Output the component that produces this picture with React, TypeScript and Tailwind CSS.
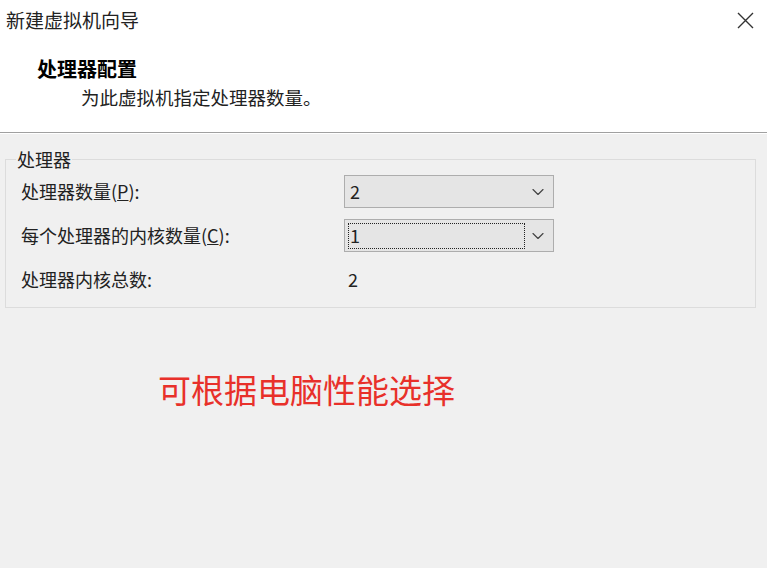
import { ChevronDown } from "lucide-react";

function Select({ value, focused }: { value: string; focused?: boolean }) {
  return (
    <div className="w-[210px] h-[33px] bg-[#e5e5e5] border border-[#adadad] flex items-center">
      <div
        className={`flex-1 h-[26px] ml-[3px] flex items-center pl-[1px] ${
          focused ? "border border-dotted border-[#222]" : "border border-transparent"
        }`}
      >
        {value}
      </div>
      <div className="w-[28px] flex items-center justify-center pr-[2px]">
        <ChevronDown size={20} strokeWidth={1.4} color="#444" />
      </div>
    </div>
  );
}

export default function App() {
  return (
    <div
      className="w-full h-[568px] bg-[#f0f0f0] text-[#1a1a1a] overflow-hidden"
      style={{ fontFamily: '"Noto Sans CJK SC", "Noto Sans", sans-serif' }}
    >
      {/* 标题区域 */}
      <div className="bg-white h-[133px] border-b border-[#a0a0a0]">
        <div className="h-[40px] flex items-center justify-between pl-[6px] pr-[13px]">
          <span className="text-[19px] text-[#222]">新建虚拟机向导</span>
          <svg width="17" height="17" viewBox="0 0 17 17">
            <path d="M1 1L16 16M16 1L1 16" stroke="#333" strokeWidth="1.4" fill="none" />
          </svg>
        </div>
        <div className="pl-[37px] mt-[15px] text-[20px] font-bold leading-[28px] text-black">处理器配置</div>
        <div className="pl-[81px] text-[18.5px] leading-[28px] text-[#222]">为此虚拟机指定处理器数量。</div>
      </div>

      {/* 处理器 */}
      <div className="border-t border-white">
        <fieldset className="ml-[5px] w-[751px] mt-[13px] border border-[#dcdcdc] pl-[15px] pb-[11px]">
          <legend className="text-[18px] leading-[24px] ml-[-5px] px-[1px] text-[#222]">处理器</legend>
          <div className="grid grid-cols-[323px_210px] gap-y-[11px] mt-[4px] text-[18px] text-[#222]">
            <div className="flex items-center h-[33px]">
              处理器数量(<span className="underline">P</span>):
            </div>
            <Select value="2" />
            <div className="flex items-center h-[33px]">
              每个处理器的内核数量(<span className="underline">C</span>):
            </div>
            <Select value="1" focused />
            <div className="flex items-center h-[33px]">处理器内核总数:</div>
            <div className="flex items-center h-[33px] pl-[4px]">2</div>
          </div>
        </fieldset>

        <div className="pl-[158px] mt-[61px] text-[33px] leading-[40px] text-[#e8302a]">可根据电脑性能选择</div>
      </div>
    </div>
  );
}
